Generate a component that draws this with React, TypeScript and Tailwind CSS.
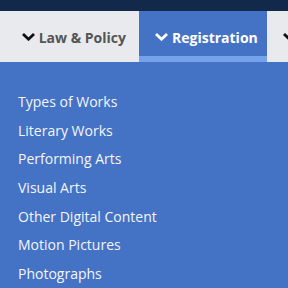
import React from "react";

const Chevron = ({ className }: { className?: string }) => (
  <svg viewBox="0 0 15 8" className={className} width="15" height="8" fill="none" stroke="currentColor" strokeWidth="2.8" strokeLinecap="butt" strokeLinejoin="miter">
    <path d="M2 1 L7.5 6.2 L13 1" />
  </svg>
);

const items = [
  "Types of Works",
  "Literary Works",
  "Performing Arts",
  "Visual Arts",
  "Other Digital Content",
  "Motion Pictures",
  "Photographs",
];

export default function App() {
  return (
    <div className="w-[288px] h-[288px] overflow-hidden bg-[#4472c4]" style={{ fontFamily: "'Open Sans', sans-serif" }}>
      <div className="h-[11px] bg-[#13294b]" />
      <div className="h-[51px] bg-[#e8eaed] flex">
        <div className="w-[139px] shrink-0 flex items-center justify-end pr-[13px] gap-[3px] text-[#555] font-bold text-[14px] pt-[1px]">
          <Chevron className="text-[#111]" />
          <span>Law &amp; Policy</span>
        </div>
        <div className="w-[128px] shrink-0 bg-[#4472c4] flex flex-col">
          <div className="flex-1 flex items-center pl-[15px] gap-[3px] text-white font-bold text-[14px] pt-[7px]">
            <Chevron className="text-white" />
            <span>Registration</span>
          </div>
          <div className="h-[6px] bg-[#74a3ec]" />
        </div>
        <div className="flex-1 flex items-center pl-[15px] pt-[1px]">
          <Chevron className="text-[#111]" />
        </div>
      </div>
      <div className="pl-[18px] pt-[29px] flex flex-col text-[#f4f6fa] text-[14px]">
        {items.map((t) => (
          <div key={t} className="h-[28.7px] leading-[22px]">{t}</div>
        ))}
      </div>
    </div>
  );
}
